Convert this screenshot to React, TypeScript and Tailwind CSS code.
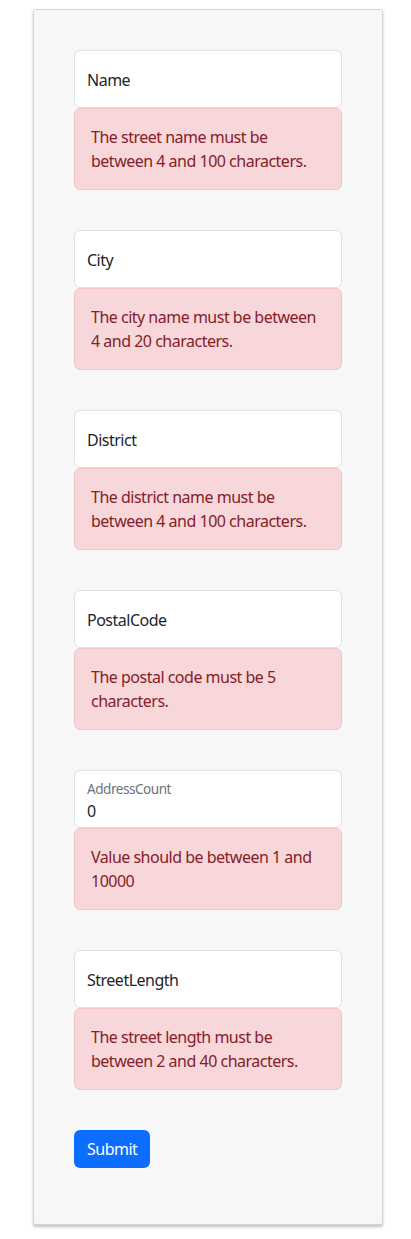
import React from "react";

type Field = {
  label: string;
  value?: string;
  error: string;
};

const fields: Field[] = [
  { label: "Name", error: "The street name must be between 4 and 100 characters." },
  { label: "City", error: "The city name must be between 4 and 20 characters." },
  { label: "District", error: "The district name must be between 4 and 100 characters." },
  { label: "PostalCode", error: "The postal code must be 5 characters." },
  { label: "AddressCount", value: "0", error: "Value should be between 1 and 10000" },
  { label: "StreetLength", error: "The street length must be between 2 and 40 characters." },
];

function FloatingField({ field }: { field: Field }) {
  const filled = field.value !== undefined;
  return (
    <div className="flex flex-col">
      <div className="relative h-[58px] rounded-[6px] border border-[#dee2e6] bg-white">
        {filled ? (
          <>
            <span className="absolute left-[12px] top-[8px] text-[13.6px] leading-[20px] text-[#6c757d]">
              {field.label}
            </span>
            <span className="absolute left-[12px] top-[28px] text-[16px] leading-[24px] text-[#212529]">
              {field.value}
            </span>
          </>
        ) : (
          <span className="absolute left-[12px] top-[17px] text-[16px] leading-[24px] text-[#212529]">
            {field.label}
          </span>
        )}
      </div>
      <div className="rounded-[6px] border border-[#f5c2c7] bg-[#f8d7da] p-4 text-[16px] leading-[24px] text-[#842029]">
        {field.error}
      </div>
    </div>
  );
}

export default function App() {
  return (
    <div
      className="min-h-[1239px] bg-white pt-[9px] pl-[33px] tracking-[-0.5px]"
      style={{ fontFamily: '"Noto Sans", "Open Sans", sans-serif' }}
    >
      <div className="w-[350px] rounded-[3px] border border-[#d6d6d6] bg-[#f7f7f7] px-10 pt-10 pb-[56px] shadow-[0_2px_3px_rgba(0,0,0,0.25)]">
        <form className="flex flex-col gap-10">
          {fields.map((f) => (
            <FloatingField key={f.label} field={f} />
          ))}
          <div>
            <button
              type="button"
              className="h-[38px] rounded-[6px] bg-[#0d6efd] px-[13px] text-[16px] leading-[24px] text-white"
            >
              Submit
            </button>
          </div>
        </form>
      </div>
    </div>
  );
}
